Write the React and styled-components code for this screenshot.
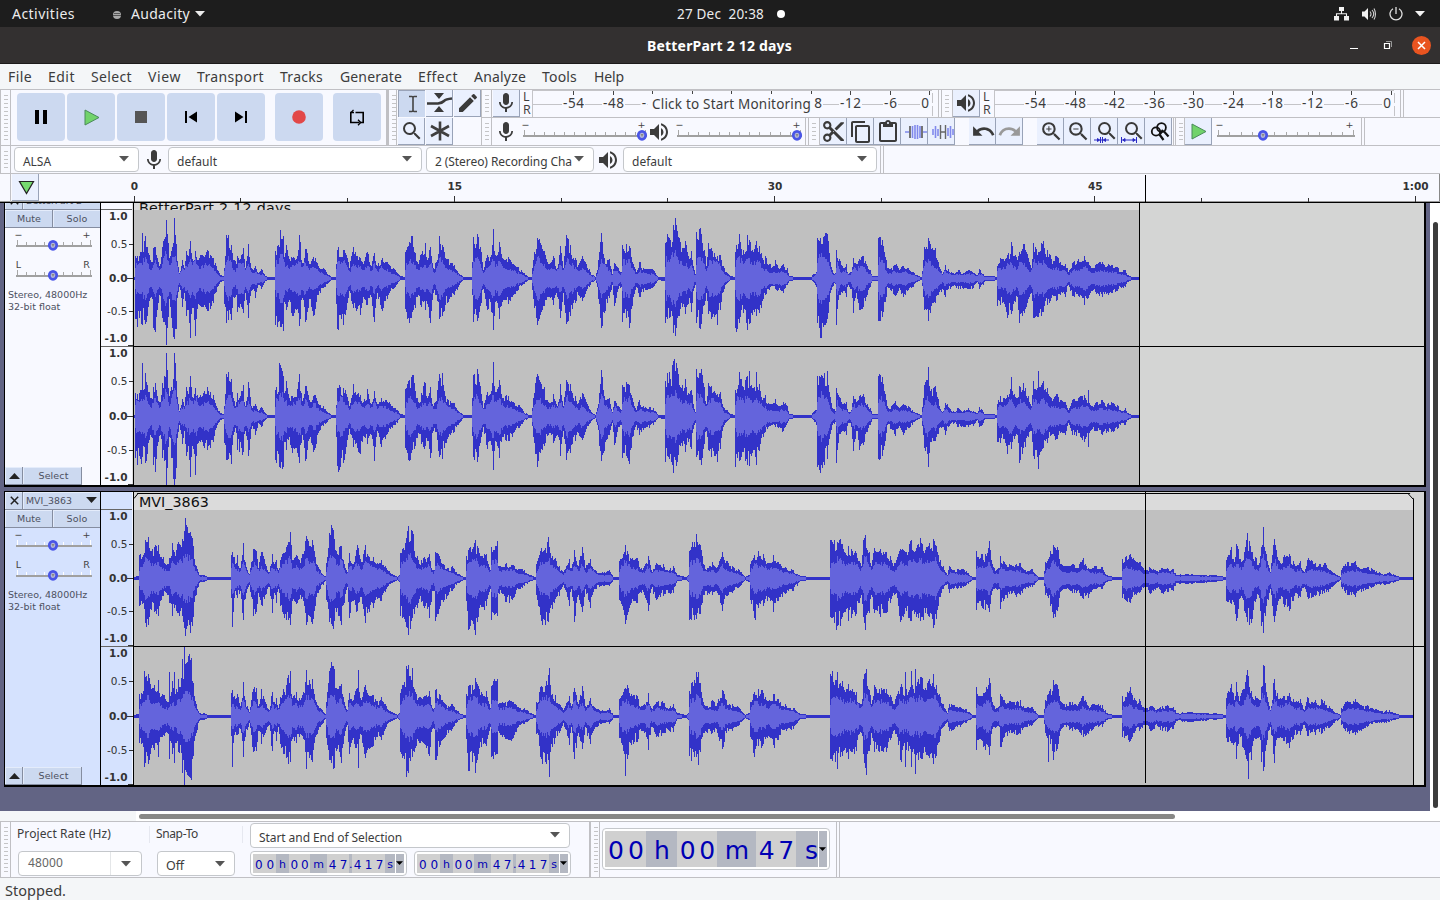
import React, { useLayoutEffect, useRef, useState } from 'react'
import styled, { createGlobalStyle, css } from 'styled-components'
import {
  MdMic,
  MdVolumeUp,
  MdEdit,
  MdSearch,
  MdZoomIn,
  MdZoomOut,
  MdContentCut,
  MdContentCopy,
  MdContentPaste,
  MdUndo,
  MdRedo
} from 'react-icons/md'

const color = {
  bar: '#f8f9ff',
  chrome: '#f4f6f8',
  line: '#c0c0c4',
  button: '#ccd9f0',
  tool: '#eaf0fe',
  edge: '#99a3b8',
  text: '#3c3c3c',
  track: '#626484',
  selected: '#d5e2fe',
  wave: '#3232c8',
  rms: '#6464dc',
  knob: '#4a55e6'
}

const ui = `'Noto Sans', 'Open Sans', sans-serif`
const mono = `'DejaVu Sans', sans-serif`

const GlobalStyle = createGlobalStyle`
  * { box-sizing: border-box; }
  body {
    margin: 0;
    overflow: hidden;
    font-family: ${ui};
    color: ${color.text};
  }
  svg { display: block; flex: none; }
`

const Window = styled.div`
  width: 1440px;
  height: 900px;
  display: flex;
  flex-direction: column;
  background: ${color.chrome};
`

/* ---------- text ---------- */

const Text = styled.span`
  flex: none;
  display: block;
  white-space: pre;
  font-family: ${props => props.$font || ui};
  font-size: ${props => props.$size || 14}px;
  font-weight: ${props => props.$bold ? 700 : 400};
  color: ${props => props.$color || 'inherit'};
  line-height: 18px;
  margin-left: ${props => props.$ml || 0}px;
  width: ${props => props.$w}px;
`

/**
 * One-line label which spreads its letters over a fixed width
 */
function Label ({ w, children, ...rest }) {
  const ref = useRef(null)
  const [spacing, setSpacing] = useState(0)
  useLayoutEffect(() => {
    const range = document.createRange()
    range.selectNodeContents(ref.current)
    setSpacing((w - range.getBoundingClientRect().width) / String(children).length)
  }, [w, children])
  return <Text ref={ref} $w={w} style={{ letterSpacing: spacing }} {...rest}>{children}</Text>
}

/* ---------- desktop bar and title bar ---------- */

const DesktopBar = styled.div`
  flex: none;
  height: 27px;
  background: #1d1d1d;
  color: #ececec;
  display: flex;
  align-items: center;
`
const AppIcon = styled.div`
  margin: 2px 9px 0 37px;
  width: 10px;
  height: 10px;
`
const Tray = styled.div`
  margin-left: auto;
  padding-right: 15px;
  display: flex;
  align-items: center;
  gap: 12px;
`
const Dot = styled.div`
  width: 8px;
  height: 8px;
  border-radius: 50%;
  background: #fff;
  margin-left: 13px;
`
const TitleBar = styled.div`
  flex: none;
  height: 37px;
  background: #333030;
  border-bottom: 1px solid #1c1b1b;
  color: #fff;
  display: flex;
  align-items: center;
  padding: 1px 9px 0 0;
`
const WindowButtons = styled.div`
  margin-left: auto;
  display: flex;
  align-items: center;
  gap: 20px;
`
const Close = styled.div`
  width: 19px;
  height: 19px;
  border-radius: 50%;
  background: #e95420;
  display: flex;
  align-items: center;
  justify-content: center;
`
const MenuBar = styled.div`
  flex: none;
  height: 26px;
  display: flex;
  align-items: center;
  background: ${color.chrome};
  border-bottom: 1px solid ${color.line};
  padding-left: 8px;
`

const Caret = ({ w = 10, fill = '#555' }) => (
  <svg width={w} height={w / 2 + 1} viewBox='0 0 10 6'><path d='M0 0H10L5 5.5Z' fill={fill} /></svg>
)

/* ---------- toolbars ---------- */

const Dock = styled.div`
  flex: none;
  display: flex;
  height: ${props => props.$h}px;
  background: ${color.bar};
  border-bottom: 1px solid ${color.line};
`
const Stack = styled.div`
  flex: 1;
  display: flex;
  flex-direction: column;
`
const Row = styled.div`
  display: flex;
  height: ${props => props.$h}px;
  ${props => props.$line && css`border-bottom: 1px solid ${color.line};`}
`
const Bar = styled.div`
  flex: none;
  display: flex;
  align-items: ${props => props.$align || 'flex-start'};
  width: ${props => props.$w}px;
  border-right: ${props => props.$end ?? 1}px solid ${color.line};
  margin-right: ${props => props.$mr || 0}px;
`
const Grabber = styled.div`
  flex: none;
  align-self: stretch;
  width: ${props => props.$w || 11}px;
  border-left: 1px solid ${color.line};
  border-right: 1px solid ${color.line};
  padding: 5px 2px 4px 3px;
  &::before {
    content: '';
    display: block;
    width: 4px;
    height: 100%;
    background: repeating-linear-gradient(#c4c4c6 0 1px, transparent 1px 4px);
  }
`
const TransportButtons = styled.div`
  display: flex;
  padding: 3px 0 0 6px;
  gap: 2px;
`
const BigButton = styled.div`
  width: 48px;
  height: 48px;
  border-radius: 4px;
  background: ${color.button};
  display: flex;
  align-items: center;
  justify-content: center;
  margin-left: ${props => props.$gap || 0}px;
`
const ToolGrid = styled.div`
  display: grid;
  grid-template-columns: repeat(3, 27px);
  grid-template-rows: 27px 27px;
  gap: 1px;
  padding-left: 1px;
`
const ToolButton = styled.div`
  flex: none;
  width: 27px;
  height: 27px;
  margin-left: ${props => props.$ml || 0}px;
  padding: ${props => props.$pad || '0 0 0 1px'};
  display: flex;
  align-items: center;
  justify-content: center;
  color: ${props => props.$color || '#3a3a3a'};
  background: ${props => props.$on ? color.button : color.tool};
  border: 0 solid ${color.edge};
  border-width: ${props => props.$on ? '1px 0 0 1px' : '0 1px 1px 0'};
`
const Plain = styled.div`
  flex: none;
  width: ${props => props.$w || 24}px;
  height: 27px;
  margin-left: ${props => props.$ml || 0}px;
  display: flex;
  align-items: center;
  justify-content: center;
`
const Channels = styled.div`
  width: 11px;
  margin-left: 3px;
  display: flex;
  flex-direction: column;
  font-family: 'Open Sans', sans-serif;
  font-size: 12.5px;
  line-height: 13px;
`
const MeterArea = styled.div`
  position: relative;
`
const MeterHint = styled.div`
  position: absolute;
  left: 116px;
  top: 4px;
  height: 19px;
  width: 166px;
  padding: 1px 0 0 4px;
  background: ${color.bar};
`
const Combo = styled.div`
  flex: none;
  width: ${props => props.$w}px;
  height: 25px;
  margin-left: ${props => props.$ml || 0}px;
  border: 1px solid #c4c7cb;
  border-radius: 4px;
  background: #fff;
  display: flex;
  align-items: center;
  justify-content: space-between;
  padding: 4px 9px 0 8px;
  overflow: hidden;
  & > svg { margin-top: -6px; }
`

function Slider ({ length, knob, steps, left = '−', right = '+', light, labelAt = 4 }) {
  const ticks = Array.from({ length: steps + 1 }, (_, i) => 1.5 + Math.round(i * (length - 3) / steps))
  return (
    <svg width={length} height='27' style={{ overflow: 'visible' }}>
      <g fontFamily={mono} fontSize='9.5' fill='#444' textAnchor='middle'>
        <text x='2.5' y={labelAt + 6}>{left}</text>
        <text x={length - 5.5} y={labelAt + 6}>{right}</text>
      </g>
      <path
        d={ticks.map((x, i) => `M${x} ${i % steps === 0 ? 12 : 14}V17`).join('')}
        stroke={light ? '#fff' : '#a8a8a8'} shapeRendering='crispEdges'
      />
      <rect x='0' y='17' width={length} height='2' fill='#a0a0a0' />
      <ellipse cx={knob} cy='17.3' rx='3.7' ry='4' fill='#b4b8d8' stroke={color.knob} strokeWidth='2.8' />
      <path d={`M${knob - 1.5} 16h3l-1.5 3z`} fill='#888' />
    </svg>
  )
}

const SCALE = ['-54', '-48', '-42', '-36', '-30', '-24', '-18', '-12', '-6', '0']
// while the hint is shown only the ends of the covered labels stick out
const COVERED = ['-54', '-48', '-', '', '', '', '8', '-12', '-6', '0']
const MARK_WIDTH = { 1: 8, 2: 13, 3: 21 }

function Meter ({ width, first, step, labels = SCALE }) {
  return (
    <svg width={width} height='27'>
      <path d={`M.5 0V27M${width - 5.5} 3V13M${width - 5.5} 16V26M0 14.5H${width - 8}M0 .5H${width - 6}`} stroke='#c4c4c8' shapeRendering='crispEdges' />
      {labels.map((mark, i) => {
        const tick = Math.round(first + i * step)
        const w = mark === '-' ? 5 : MARK_WIDTH[mark.length]
        const x = mark === '-' ? tick - 8 : mark === '8' ? tick + 7 : mark === '0' ? tick - 4 : tick + 0.5
        return (
          <g key={i}>
            <path d={`M${tick + 0.5} 1v4`} stroke='#444' />
            {mark && <rect x={x - w / 2 - 1} y='6' width={w + 2} height='14' fill={color.bar} />}
            {mark && (
              <text x={x} y='18' textAnchor='middle' fontFamily={ui} fontSize='13.5' fill='#3c3c3c' textLength={w}>
                {mark}
              </text>
            )}
          </g>
        )
      })}
    </svg>
  )
}

/* ---------- icons which no package has ---------- */

const PlayIcon = () => (
  <svg width='17' height='17' viewBox='-1 0 17 17'>
    <path d='M1 1L15 8.5L1 16Z' fill='#71d36a' stroke='#4a8a5a' strokeWidth='1' />
  </svg>
)
const SkipIcon = ({ flip }) => (
  <svg width='14' height='14' viewBox='0 0 14 14' transform={flip ? 'scale(-1 1)' : undefined}>
    <path d='M1 1h2v12H1zM13 1.5v11L4.5 7z' fill='#000' />
  </svg>
)
const LoopIcon = () => (
  <svg width='16' height='17' viewBox='0 0 16 17' fill='none' stroke='#000' strokeWidth='1.6'>
    <path d='M5 3.500H1.800V13.500H10.500M11.500 13.500H14.200V3.500H6.500' />
    <path d='M4.500 .8L2.200 3.500M9 10.800L11.700 13.500L9 16.200' strokeWidth='1.3' />
  </svg>
)
const IBeamIcon = () => (
  <svg width='10' height='18' viewBox='0 0 10 18' fill='none' stroke='#444' strokeWidth='1.6'>
    <path d='M1 1.5H4Q5 1.5 5 3V15Q5 16.5 4 16.5H1M9 1.5H6Q5 1.5 5 3M9 16.5H6Q5 16.5 5 15' />
  </svg>
)
const EnvelopeIcon = () => (
  <svg width='26' height='22' viewBox='0 0 26 22' fill='#3a3a3a'>
    <path d='M7 1H17L12 7ZM12 14L17 20H7Z' />
    <path d='M0 11.5H11Q15 11 17 9T25 6.5' fill='none' stroke='#3a3a3a' strokeWidth='2.6' />
  </svg>
)
const StarIcon = () => (
  <svg width='20' height='20' viewBox='0 0 20 20' stroke='#3f3f3f' strokeWidth='2.6'>
    <path d='M10 .5V19.5M1 5L19 15M19 5L1 15' />
  </svg>
)
const WaveMark = ({ silence }) => (
  <svg width='22' height='16' viewBox='0 0 22 16' fill='none'>
    {silence
      ? <path d='M1 5v6M3.5 2v12M6 5v7M16 4v8M18.5 2v12M21 5v6' stroke='#8089ec' strokeWidth='1.6' />
      : <path d='M0 8H4M18 8H22M7.5 2v12M10 1v14M12.5 1v14M15 2v12' stroke='#8089ec' strokeWidth='1.6' />}
    {silence
      ? <path d='M8.5 1v14M13.5 1v14M8.5 8h5' stroke='#666' strokeWidth='1.4' />
      : <path d='M5 2v12M17 2v12' stroke='#555' strokeWidth='1.6' />}
  </svg>
)
const FitIcon = ({ whole }) => (
  <svg width='26' height='27' viewBox='0 0 26 27'>
    <g transform='translate(2 1)'>
      <path fill='#3a3a3a' d='M15.500 14h-.79l-.28-.27A6.471 6.471 0 0 0 16 9.500 6.500 6.500 0 1 0 9.500 16c1.610 0 3.090-.59 4.230-1.570l.27.28v.79l5 4.990L20.490 19l-4.990-5zm-6 0C7.010 14 5 11.990 5 9.500S7.010 5 9.500 5 14 7.010 14 9.500 11.990 14 9.500 14z' />
    </g>
    {whole
      ? <path d='M1.500 19v6M16.500 19v6M2 22h14M5 20.500l-2 1.500l2 1.500zM13 20.500l2 1.500l-2 1.500z' stroke='#2a2ac4' fill='#2a2ac4' />
      : <path d='M1 22h15M7.500 19v6M9.500 19v6M4.500 20.500l2 1.500l-2 1.500zM12.500 20.500l-2 1.500l2 1.500z' stroke='#2a2ac4' fill='#2a2ac4' />}
  </svg>
)
const ToggleZoomIcon = () => (
  <svg width='20' height='20' viewBox='0 0 20 20' fill='none' stroke='#111' strokeWidth='1.8'>
    <circle cx='11.500' cy='5.500' r='4.400' />
    <circle cx='6' cy='9.500' r='4.200' />
    <path d='M14 9.500L18.500 14.500M9.500 12.500L13.500 18M13 8L10 12' strokeWidth='2.200' />
  </svg>
)
const NetworkIcon = () => (
  <svg width='15' height='14' viewBox='0 0 15 14' fill='#f2f2f2'>
    <path d='M5 0h5v4H5zM0 9h5v4.5H0zM10 9h5v4.5h-5z' />
    <path d='M7.5 4v3M2.5 9V6.7h10V9' fill='none' stroke='#f2f2f2' strokeWidth='1.1' />
  </svg>
)
const TrayVolumeIcon = () => (
  <svg width='16' height='14' viewBox='0 0 16 14' fill='#f2f2f2'>
    <path d='M1 4.5h2.5L7 1v12L3.500 9.500H1z' />
    <path d='M9 4.500q2 2.500 0 5M11 3q3.500 4 0 8M13 1.500q3 5.500 0 11' fill='none' stroke='#d0d0d0' strokeWidth='1.1' />
  </svg>
)
const PowerIcon = () => (
  <svg width='14' height='14' viewBox='0 0 14 14' fill='none' stroke='#e0e0e0' strokeWidth='1.300'>
    <path d='M4 1.700A6 6 0 1 0 10 1.700M7 0V7' />
  </svg>
)

/* ---------- timeline ---------- */

const Timeline = styled.div`
  flex: none;
  height: 29px;
  display: flex;
  background: ${color.bar};
  border-bottom: 1px solid #000;
  box-shadow: inset 0 -1px #999, inset -1px 0 #888;
`
const PinCell = styled.div`
  width: 11px;
  border-right: 1px solid ${color.line};
`

function Ruler () {
  // the origin sits at x = 134 of the window, 5 seconds are 106.75px
  const marks = Array.from({ length: 13 }, (_, i) => i)
  const names = { 0: '0', 3: '15', 6: '30', 9: '45', 12: '1:00' }
  return (
    <svg width='1400' height='28'>
      {marks.map(i => {
        const x = Math.floor(95 + i * 106.75)
        return <path key={i} d={`M${x + 0.5} ${names[i] ? 22 : 24}V28`} stroke='#333' />
      })}
      {Object.keys(names).map(i => (
        <text key={i} x={95.5 + i * 106.75} y='16' textAnchor='middle' fontFamily={mono} fontWeight='700' fontSize='10.5' fill='#333'>
          {names[i]}
        </text>
      ))}
      <path d='M1106.5 1V28' stroke='#000' />
    </svg>
  )
}

/* ---------- tracks ---------- */

const TrackArea = styled.div`
  flex: none;
  display: flex;
  height: 608px;
`
const TrackCanvas = styled.div`
  width: 1430px;
  background: ${color.track};
  overflow: hidden;
`
const VScroll = styled.div`
  width: 10px;
  background: #fff;
  padding: 19px 2px 0 3px;
  &::before {
    content: '';
    display: block;
    width: 5px;
    height: 586px;
    border-radius: 3px;
    background: #3c3c3c;
  }
`
const Track = styled.div`
  display: flex;
  width: 1421px;
  height: 296px;
  margin: ${props => props.$mt}px 0 0 4px;
  border: 1px solid #000;
  border-width: 1px 1px 2px 1px;
  box-shadow: 1px 0 #000;
  background: #d4d5d4;
  overflow: hidden;
`
const Panel = styled.div`
  flex: none;
  width: 96px;
  display: flex;
  flex-direction: column;
  border-right: 1px solid #000;
  background: ${props => props.$selected ? color.selected : color.bar};
  color: #4c5060;
`
const PanelRow = styled.div`
  display: flex;
  height: 18px;
  flex: none;
`
const PanelButton = styled.div`
  width: ${props => props.$w}px;
  display: flex;
  align-items: center;
  justify-content: ${props => props.$split ? 'space-between' : 'center'};
  padding: ${props => props.$split ? '0 3px 0 3px' : '0 0 0 1px'};
  background: ${color.button};
  border-right: 1px solid #858da0;
  border-bottom: 1px solid #858da0;
  box-shadow: inset 1px 1px #e4ecfb;
  &:last-child { border-right-width: ${props => props.$keep ? 1 : 0}px; }
`
const PanelSlider = styled.div`
  height: 30px;
  padding-left: 11px;
`
const PanelInfo = styled.div`
  padding: 1px 0 0 3px;
  font-family: ${mono};
  font-size: 9.5px;
  line-height: 12px;
  white-space: nowrap;
`
const PanelFoot = styled(PanelRow)`
  margin-top: auto;
`
const Lane = styled.div`
  position: relative;
  width: ${props => props.$w}px;
  height: 293px;
  border-right: 1px solid #000;
  background: #c0c0c0;
`
const ClipTitle = styled.div`
  height: 18px;
  padding: ${props => props.$drop}px 0 0 5px;
  background: #dbdbdb;
  overflow: hidden;
  white-space: nowrap;
  font-family: ${mono};
  font-size: 14.3px;
  letter-spacing: ${props => props.$drop ? 0.25 : 0}px;
  line-height: 20px;
  color: #111;
  box-shadow: inset 0 1px #d4d5d4, inset 0 2px #000;
`
const ClipCorners = styled.svg`
  position: absolute;
  left: 0;
  top: 0;
`
const PlayCursor = styled.div`
  position: absolute;
  left: 1011px;
  top: 0;
  width: 1px;
  height: 291px;
  background: #000;
`

// [x, above, below] of the loudest samples, in pixels
const BETTER_PART = [
  0, 1, 1, 1, 22, 40, 3, 22, 48, 5, 22, 38, 7, 26, 46, 8, 45, 46, 9, 27, 30, 11, 43, 46, 13, 30, 36, 15, 23, 22,
  18, 16, 20, 19, 30, 50, 21, 32, 54, 23, 20, 30, 26, 14, 18, 28, 32, 40, 30, 40, 44, 32, 58, 66, 33, 45, 50,
  35, 20, 20, 37, 28, 40, 39, 36, 60, 40, 62, 62, 42, 34, 50, 43, 18, 20, 45, 5, 8, 48, 18, 28, 50, 10, 14,
  52, 28, 38, 54, 22, 30, 56, 36, 58, 58, 20, 30, 61, 28, 58, 64, 18, 26, 66, 22, 26, 69, 22, 28, 73, 29, 33,
  76, 23, 30, 79, 20, 24, 83, 8, 8, 86, 3, 3, 89, 2, 2, 90, 10, 25, 92, 42, 43, 94, 45, 43, 97, 34, 42,
  99, 18, 18, 102, 14, 16, 103, 22, 32, 109, 30, 34, 111, 10, 14, 114, 33, 38, 117, 10, 12, 120, 10, 12,
  121, 12, 18, 124, 5, 6, 127, 9, 10, 130, 4, 4, 133, 1, 1, 140, 1, 1, 141, 26, 44, 145, 32, 44, 146, 50, 50,
  149, 42, 52, 150, 22, 24, 152, 34, 32, 155, 18, 20, 158, 20, 36, 162, 20, 32, 165, 42, 46, 168, 15, 18,
  171, 30, 44, 173, 24, 32, 176, 14, 20, 179, 20, 36, 181, 20, 30, 184, 12, 16, 189, 10, 9, 193, 4, 5,
  197, 1, 1, 201, 1, 1, 203, 28, 50, 209, 28, 46, 213, 20, 24, 215, 10, 12, 219, 32, 30, 223, 22, 30,
  226, 20, 36, 229, 14, 18, 233, 26, 26, 237, 12, 18, 240, 25, 44, 243, 12, 14, 247, 18, 30, 251, 16, 22,
  256, 12, 12, 261, 8, 8, 266, 2, 1, 270, 1, 1, 271, 26, 30, 275, 36, 44, 278, 43, 34, 281, 24, 28,
  284, 14, 16, 287, 24, 28, 291, 34, 30, 293, 18, 24, 296, 30, 42, 299, 10, 14, 302, 16, 16, 305, 42, 40,
  308, 34, 38, 311, 20, 26, 316, 15, 18, 320, 13, 16, 324, 5, 8, 329, 1, 1, 337, 1, 1, 339, 40, 42,
  343, 46, 44, 346, 30, 26, 349, 8, 10, 353, 24, 32, 356, 22, 24, 359, 48, 50, 361, 24, 24, 365, 36, 40,
  369, 18, 20, 374, 20, 24, 379, 14, 16, 384, 11, 11, 389, 5, 5, 394, 1, 1, 397, 1, 1, 399, 18, 20,
  403, 42, 48, 407, 32, 32, 410, 28, 28, 414, 14, 18, 419, 22, 26, 423, 10, 18, 426, 32, 40, 429, 10, 14,
  432, 42, 44, 436, 32, 36, 441, 20, 24, 444, 13, 16, 448, 22, 22, 452, 14, 12, 456, 6, 6, 461, 1, 1,
  463, 8, 8, 467, 44, 48, 470, 20, 34, 475, 18, 18, 478, 4, 6, 480, 15, 28, 484, 10, 10, 487, 6, 8,
  488, 32, 42, 492, 33, 38, 495, 32, 48, 499, 14, 18, 502, 6, 8, 505, 16, 18, 509, 10, 13, 519, 8, 8,
  524, 1, 1, 530, 1, 2, 531, 36, 46, 533, 45, 40, 536, 38, 38, 539, 55, 56, 542, 54, 50, 544, 42, 38,
  548, 30, 28, 551, 36, 34, 554, 22, 24, 557, 26, 32, 559, 12, 12, 561, 4, 6, 562, 46, 44, 567, 45, 46,
  570, 28, 26, 572, 12, 14, 574, 34, 34, 577, 30, 40, 580, 26, 40, 583, 22, 46, 586, 24, 32, 588, 12, 14,
  592, 6, 5, 596, 2, 1, 600, 1, 1, 601, 26, 50, 605, 44, 44, 609, 28, 34, 613, 42, 50, 618, 28, 36,
  622, 36, 36, 625, 32, 34, 629, 18, 20, 631, 22, 16, 634, 13, 10, 641, 17, 10, 644, 10, 11, 649, 14, 14,
  653, 10, 6, 655, 2, 2, 661, 1, 1, 677, 1, 1, 679, 4, 3, 682, 6, 8, 683, 40, 44, 686, 40, 58, 690, 42, 46,
  693, 44, 40, 695, 24, 22, 698, 8, 8, 701, 5, 5, 702, 28, 46, 705, 18, 16, 708, 12, 14, 712, 14, 18,
  714, 4, 6, 717, 6, 10, 719, 20, 34, 722, 14, 14, 725, 20, 32, 729, 22, 28, 733, 12, 16, 736, 8, 8,
  738, 2, 2, 743, 2, 2, 744, 40, 42, 748, 38, 38, 751, 22, 24, 753, 10, 8, 757, 10, 12, 761, 14, 18,
  765, 8, 9, 769, 12, 18, 774, 10, 11, 778, 6, 8, 784, 2, 2, 787, 1, 1, 789, 18, 18, 790, 30, 30,
  794, 40, 42, 797, 28, 26, 801, 30, 24, 804, 16, 16, 808, 4, 10, 811, 13, 18, 814, 9, 10, 819, 5, 7,
  824, 8, 10, 828, 4, 9, 834, 8, 10, 839, 5, 9, 843, 3, 3, 845, 9, 10, 849, 4, 6, 851, 2, 2, 859, 2, 2,
  862, 1, 1, 863, 12, 26, 866, 20, 26, 869, 18, 22, 873, 22, 38, 877, 35, 34, 880, 22, 22, 883, 18, 18,
  885, 26, 44, 889, 34, 32, 891, 28, 30, 894, 20, 20, 897, 10, 14, 899, 34, 38, 904, 26, 38, 909, 36, 32,
  913, 28, 26, 917, 18, 18, 922, 22, 22, 926, 16, 16, 931, 14, 18, 934, 6, 6, 938, 16, 18, 944, 18, 16,
  950, 22, 26, 954, 16, 20, 958, 10, 12, 963, 14, 14, 968, 16, 18, 973, 12, 14, 978, 13, 14, 983, 11, 12,
  986, 6, 8, 991, 8, 8, 993, 3, 3, 998, 1, 1, 1005, 1, 1
]

const MVI = [
  0, 1, 1, 4, 2, 1, 5, 22, 26, 8, 22, 26, 11, 38, 44, 14, 41, 46, 17, 26, 30, 20, 32, 34, 24, 32, 36, 27, 20, 20,
  29, 22, 18, 33, 14, 16, 36, 20, 24, 38, 34, 36, 41, 22, 26, 44, 36, 34, 48, 40, 38, 49, 36, 42, 51, 58, 55,
  54, 46, 42, 56, 45, 52, 59, 32, 38, 60, 20, 24, 62, 12, 16, 65, 3, 4, 69, 3, 3, 73, 1, 1, 96, 1, 1,
  97, 24, 20, 98, 26, 48, 100, 20, 18, 103, 22, 18, 106, 10, 12, 109, 34, 40, 111, 16, 20, 115, 4, 6,
  117, 16, 18, 119, 28, 36, 122, 28, 34, 124, 10, 14, 127, 26, 26, 131, 14, 16, 135, 6, 8, 138, 24, 34,
  140, 14, 14, 142, 18, 24, 144, 8, 10, 146, 18, 26, 149, 26, 36, 152, 30, 40, 156, 46, 46, 158, 18, 22,
  162, 24, 26, 165, 18, 20, 169, 24, 22, 172, 42, 46, 176, 32, 38, 178, 38, 46, 182, 14, 18, 186, 8, 10,
  191, 2, 2, 192, 14, 20, 195, 44, 42, 197, 54, 46, 199, 48, 50, 202, 28, 34, 205, 30, 36, 207, 32, 46,
  211, 10, 14, 213, 6, 8, 215, 24, 38, 218, 14, 22, 222, 28, 32, 224, 30, 24, 227, 16, 18, 231, 32, 42,
  235, 20, 32, 239, 20, 28, 243, 15, 20, 247, 18, 22, 252, 10, 10, 256, 5, 5, 263, 1, 1, 265, 3, 3, 266, 24, 36,
  269, 30, 38, 272, 40, 48, 274, 50, 54, 278, 49, 40, 280, 28, 36, 284, 18, 24, 287, 18, 24, 291, 20, 28,
  295, 24, 38, 298, 8, 12, 300, 8, 12, 301, 26, 42, 305, 22, 30, 309, 14, 22, 314, 10, 16, 318, 12, 12, 322, 6, 6,
  329, 1, 1, 331, 1, 1, 332, 22, 22, 334, 28, 50, 338, 30, 44, 341, 37, 54, 345, 26, 30, 349, 20, 28, 352, 24, 28,
  356, 8, 10, 357, 30, 40, 363, 38, 38, 364, 12, 14, 371, 14, 22, 378, 14, 22, 384, 9, 10, 390, 8, 7,
  396, 3, 2, 401, 1, 1, 402, 14, 16, 407, 30, 42, 411, 30, 46, 414, 42, 44, 418, 22, 30, 421, 20, 20,
  425, 12, 16, 429, 6, 6, 435, 20, 28, 437, 10, 10, 440, 28, 42, 444, 12, 16, 448, 30, 32, 451, 10, 10,
  456, 18, 28, 461, 8, 10, 467, 5, 7, 475, 8, 7, 479, 1, 1, 484, 1, 1, 485, 16, 20, 491, 32, 44, 496, 20, 26,
  502, 20, 24, 507, 10, 14, 510, 12, 16, 514, 22, 32, 517, 8, 10, 522, 14, 20, 529, 13, 16, 535, 8, 14,
  539, 12, 14, 543, 3, 2, 552, 1, 1, 554, 3, 3, 555, 26, 40, 560, 36, 40, 562, 44, 40, 566, 34, 36,
  569, 14, 16, 573, 10, 16, 578, 16, 16, 582, 10, 12, 588, 26, 32, 592, 16, 16, 598, 12, 14, 604, 9, 9,
  611, 1, 1, 615, 3, 3, 616, 14, 20, 620, 24, 40, 624, 26, 28, 629, 24, 28, 635, 16, 20, 639, 22, 32, 646, 14, 18,
  652, 10, 14, 659, 8, 12, 666, 2, 2, 676, 1, 1, 695, 1, 1, 696, 40, 40, 699, 34, 38, 703, 36, 48, 708, 34, 38,
  711, 24, 32, 714, 32, 42, 718, 28, 36, 722, 24, 34, 727, 12, 16, 729, 38, 38, 731, 44, 52, 735, 26, 34,
  737, 12, 16, 740, 30, 34, 745, 28, 36, 752, 26, 34, 756, 22, 24, 759, 12, 14, 763, 22, 20, 766, 30, 44,
  772, 26, 32, 777, 38, 42, 782, 30, 38, 786, 40, 42, 791, 28, 34, 795, 36, 40, 799, 40, 50, 802, 32, 40,
  806, 18, 18, 809, 12, 10, 813, 3, 5, 815, 12, 14, 823, 9, 10, 832, 7, 6, 838, 1, 1, 841, 1, 1, 842, 28, 32,
  846, 20, 22, 851, 24, 32, 855, 38, 34, 858, 14, 12, 862, 8, 10, 865, 10, 10, 866, 22, 30, 870, 16, 20, 875, 15, 16,
  882, 14, 18, 886, 15, 16, 891, 8, 10, 898, 9, 8, 904, 1, 1, 909, 1, 1, 911, 16, 16, 916, 26, 26,
  919, 34, 40, 924, 28, 28, 927, 14, 12, 932, 12, 10, 938, 14, 14, 943, 10, 12, 949, 20, 20, 954, 10, 18,
  960, 12, 10, 968, 11, 10, 972, 3, 3, 979, 1, 1, 987, 1, 1, 988, 20, 20, 995, 24, 24, 1000, 18, 16,
  1005, 17, 14, 1010, 8, 8, 1013, 8, 8, 1016, 10, 14, 1023, 7, 9, 1028, 10, 14, 1039, 9, 12, 1042, 3, 4,
  1053, 4, 5, 1068, 3, 4, 1079, 3, 3, 1091, 1, 1, 1092, 18, 22, 1097, 32, 26, 1100, 16, 26, 1102, 34, 42,
  1106, 20, 20, 1110, 26, 32, 1113, 46, 44, 1117, 26, 44, 1121, 20, 22, 1125, 16, 20, 1127, 30, 46,
  1129, 50, 53, 1132, 24, 28, 1136, 6, 10, 1140, 40, 44, 1144, 18, 22, 1149, 20, 24, 1155, 24, 32,
  1160, 14, 18, 1166, 17, 18, 1170, 6, 8, 1173, 18, 18, 1181, 16, 18, 1190, 15, 14, 1196, 8, 10, 1206, 1, 1,
  1207, 8, 8, 1211, 14, 14, 1221, 17, 18, 1229, 10, 12, 1233, 11, 10, 1242, 7, 6, 1250, 4, 6, 1255, 6, 5,
  1260, 3, 3, 1266, 1, 1, 1279, 1, 1
]

// single loud samples of the right channels
const BETTER_PART_RIGHT = {
  8: [53, 40], 32: [63, 69], 40: [63, 69], 56: [40, 60], 61: [28, 58], 92: [42, 43], 97: [37, 47], 145: [53, 50],
  204: [28, 55], 308: [43, 42], 339: [41, 40], 359: [54, 53], 403: [42, 50], 432: [36, 43], 467: [46, 44],
  538: [51, 48], 562: [47, 40], 601: [26, 50], 615: [45, 49], 622: [44, 48], 683: [40, 50], 693: [45, 42],
  794: [49, 50], 877: [39, 32], 904: [45, 52], 885: [30, 46], 954: [26, 30]
}
const MVI_RIGHT = {
  10: [45, 50], 24: [36, 40], 35: [44, 42], 40: [44, 46], 48: [57, 56], 50: [69, 68], 51: [52, 53], 52: [53, 55],
  53: [54, 58], 54: [60, 59], 55: [62, 60], 56: [56, 61], 57: [58, 63], 98: [26, 50], 172: [46, 52], 200: [47, 51],
  224: [46, 51], 272: [50, 60], 278: [48, 40], 334: [30, 54], 415: [48, 60], 491: [28, 59], 564: [44, 48],
  639: [22, 28], 698: [45, 44], 703: [44, 52], 732: [47, 58], 771: [44, 50], 777: [45, 50], 781: [47, 57],
  799: [42, 47], 855: [38, 38], 914: [22, 45], 919: [36, 43], 996: [29, 24], 1114: [40, 62], 1130: [50, 50],
  1140: [37, 46]
}

const noise = n => {
  const s = Math.sin(n * 12.9898) * 43758.5453
  return s - Math.floor(s)
}

function wavePaths (points, width, center, seed, peaks = {}) {
  const up = []
  const down = []
  const exact = {}
  for (let i = 0; i + 5 < points.length; i += 3) {
    const [x0, u0, d0, x1, u1, d1] = points.slice(i, i + 6)
    exact[x0] = true
    for (let x = x0; x <= x1; x++) {
      const t = (x - x0) / (x1 - x0)
      up[x] = u0 + (u1 - u0) * t
      down[x] = d0 + (d1 - d0) * t
    }
  }
  // quiet samples keep their level, loud ones get the grain of the recording
  const shape = (value, x, salt) => {
    if (value < 3) return value
    if (exact[x]) return value * (0.96 + 0.08 * noise(x + seed * 13))
    return value * (0.7 + 0.4 * noise(Math.floor((x + 1) / 2) + salt) + 0.1 * (noise(x + salt) - 0.5))
  }
  let outer = ''
  let inner = ''
  for (let x = 0; x < width; x++) {
    const a = up[x] || 1
    const b = down[x] || 1
    const u = peaks[x] ? peaks[x][0] : shape(a, x, seed * 71)
    const d = peaks[x] ? peaks[x][1] : shape(b, x, seed * 71 + (x % 3 ? 0 : 37))
    const top = Math.min(center, Math.round(u))
    const bottom = Math.min(center, Math.round(d))
    outer += `M${x} ${center - top}h1v${top + bottom + 1}h-1z`
    const near = [x - 1, x, x + 1].map(n => (up[n] || 1) + (down[n] || 1))
    const level = near.reduce((sum, n) => sum + n, 0) / 6
    const r = Math.round(Math.min(level * 0.46 * (0.8 + 0.36 * noise(x * 3 + seed)), top - 1, bottom - 1))
    if (r > 0) inner += `M${x} ${center - r}h1v${2 * r + 1}h-1z`
  }
  return [outer, inner]
}

function Wave ({ points, width, height, seed, peaks }) {
  const center = height / 2
  const [outer, inner] = wavePaths(points, width, center, seed, peaks)
  return (
    <svg width={width} height={height} shapeRendering='crispEdges'>
      <path d={outer} fill={color.wave} />
      <path d={inner} fill={color.rms} />
    </svg>
  )
}

const Divider = styled.div`
  height: 1px;
  width: ${props => props.$w}px;
  background: #000;
`

function Axis ({ selected }) {
  const labels = [
    ['1.0', 25], ['0.5', 53], ['0.0', 87], ['-0.5', 120], ['-1.0', 147],
    ['1.0', 162], ['0.5', 190], ['0.0', 225], ['-0.5', 259], ['-1.0', 286]
  ]
  return (
    <svg width='33' height='293'>
      <rect width='32' height='293' fill={selected ? color.selected : color.bar} />
      <path d='M31.500 0V293' stroke={selected ? '#f0f4ff' : '#ddd'} />
      <path d='M32.500 0V293' stroke='#000' />
      <path d='M0 17.500H31M0 154.500H32' stroke='#666' />
      <path d='M28 52.500h4M26 86.500h6M28 119.500h4M27 153.500h5M28 189.500h4M26 224.500h6M28 258.500h4M27 292.500h5' stroke='#333' />
      {labels.map(([name, y]) => (
        <text
          key={y} x='26.5' y={y + 3} textAnchor='end' fontFamily={mono} fontSize='10.5' fill='#333'
          fontWeight={name.endsWith('.5') ? 400 : 700}
        >
          {name}
        </text>
      ))}
    </svg>
  )
}

function AudioTrack ({ name, clip, drop, corners, width, points, right, seed, selected, mt }) {
  return (
    <Track $mt={mt}>
      <Panel $selected={selected}>
        <PanelRow>
          <PanelButton $w={18}>
            <svg width='10' height='9' viewBox='-1 0 10 9'><path d='M.8 .8L8.200 8.200M8.200 .8L.8 8.200' stroke='#222' strokeWidth='1.500' /></svg>
          </PanelButton>
          <PanelButton $w={77} $split>
            <Label w={name.length > 8 ? 56 : 46} $size={9.4} $font={mono}>{name}</Label>
            <Caret w={11} fill='#222' />
          </PanelButton>
        </PanelRow>
        <PanelRow>
          <PanelButton $w={48}><Label w={24} $size={9.5} $font={mono}>Mute</Label></PanelButton>
          <PanelButton $w={47}><Label w={21} $size={9.5} $font={mono}>Solo</Label></PanelButton>
        </PanelRow>
        <PanelSlider><Slider length={76} knob={37} steps={8} light={selected} /></PanelSlider>
        <PanelSlider><Slider length={76} knob={37} steps={8} light={selected} left='L' right='R' /></PanelSlider>
        <PanelInfo>Stereo, 48000Hz<br />32-bit float</PanelInfo>
        <PanelFoot>
          <PanelButton $w={18}>
            <svg width='12' height='6' viewBox='-1 0 12 6'><path d='M0 6H11L5.500 0Z' fill='#222' /></svg>
          </PanelButton>
          <PanelButton $w={59} $keep><Label w={30} $ml={2} $size={9.5} $font={mono}>Select</Label></PanelButton>
        </PanelFoot>
      </Panel>
      <Axis selected={selected} />
      <Lane $w={width + 1}>
        <ClipTitle $drop={drop}>{clip}</ClipTitle>
        {corners && (
          <ClipCorners width={width + 1} height='8'>
            <path d={`M0 0H4L0 7ZM${width + 1} 0H${width - 4}L${width + 1} 7Z`} fill='#d4d5d4' />
            <path d={`M0 6.500L4 1.500M${width - 5} 1.500L${width} 7`} stroke='#000' fill='none' />
          </ClipCorners>
        )}
        <Wave points={points} width={width} height={136} seed={seed} />
        <Divider $w={1290} />
        <Wave points={points} width={width} height={138} seed={seed + 5} peaks={right} />
        {selected && <PlayCursor />}
      </Lane>
    </Track>
  )
}

/* ---------- bottom ---------- */

const HScroll = styled.div`
  flex: none;
  height: 11px;
  background: linear-gradient(90deg, ${color.chrome} 136px, #fff 136px);
  border-bottom: 1px solid ${color.line};
  padding: 3px 0 0 139px;
  &::before {
    content: '';
    display: block;
    width: 1036px;
    height: 5px;
    border-radius: 3px;
    background: #888886;
  }
`
const Field = styled.div`
  display: flex;
  flex-direction: column;
  width: ${props => props.$w}px;
  padding: ${props => props.$pad || '3px 0 0 6px'};
  gap: ${props => props.$gap || 8}px;
`
const FieldRow = styled.div`
  display: flex;
  gap: 7px;
`
const Rule = styled.div`
  width: 1px;
  height: 17px;
  margin-top: 4px;
  background: #e6e8f0;
`
const TimeBox = styled.div`
  display: flex;
  align-items: stretch;
  height: ${props => props.$big ? 42 : 25}px;
  margin: ${props => props.$big ? '6px 0 0 2px' : 0};
  padding: 2px;
  border: 1px solid #c4c7cb;
  border-radius: 4px;
  background: #fff;
`
const Cell = styled.div`
  width: ${props => props.$w}px;
  padding: ${props => props.$big ? '4px 0 0 1px' : '2px 0 0'};
  display: flex;
  justify-content: ${props => props.$w < 25 && props.$big ? 'flex-end' : 'space-around'};
  align-items: center;
  font-family: ${mono};
  color: #0000b4;
  background: ${props => props.$digit ? '#d0d0d0' : '#b4b8c2'};
  font-size: ${props => props.$size}px;
  line-height: 18px;
`
const TimeArrow = styled.div`
  width: 8px;
  margin-left: 1px;
  display: flex;
  align-items: center;
  background: #b4b8c2;
`

function TimeControl ({ parts, big }) {
  return (
    <TimeBox $big={big}>
      {parts.map(([text, w], i) => {
        const digit = /\d/.test(text)
        const size = big ? 25 : digit ? 12 : 11
        return (
          <Cell key={i} $w={w} $digit={digit} $size={size} $big={big}>
            {text.split('').map((char, n) => <span key={n}>{char}</span>)}
          </Cell>
        )
      })}
      <TimeArrow><Caret w={7} fill='#000' /></TimeArrow>
    </TimeBox>
  )
}

const SMALL_TIME = [['00', 23], ['h', 13], ['00', 21], ['m', 17], ['47', 22], ['.', 3], ['417', 33], ['s', 10]]
const BIG_TIME = [['00', 41], ['h', 31], ['00', 40], ['m', 39], ['47', 40], ['s', 22]]

const RateCombo = styled(Combo)`
  padding: 0 10px 1px 8px;
  background: linear-gradient(90deg, transparent 91px, #e4e6e8 91px, #e4e6e8 92px, transparent 92px), #fff;
  & > svg { margin-top: 1px; }
`
const SnapCombo = styled(Combo)`
  & > svg { margin-top: -4px; }
`
const StatusBar = styled.div`
  flex: 1;
  display: flex;
  align-items: center;
  padding: 2px 0 0 5px;
`

const MENUS = [
  ['File', 24, 0], ['Edit', 27, 16], ['Select', 41, 16], ['View', 33, 16], ['Transport', 67, 16], ['Tracks', 43, 16],
  ['Generate', 62, 17], ['Effect', 40, 16], ['Analyze', 52, 16], ['Tools', 35, 16], ['Help', 30, 17]
]

export default function App () {
  return (
    <Window>
      <GlobalStyle />
      <DesktopBar>
        <Label w={63} $ml={12} $size={14}>Activities</Label>
        <AppIcon>
          <svg width='10' height='10' viewBox='0 0 10 10'>
            <circle cx='5' cy='5' r='4' fill='#a8a8a8' />
            <path d='M1 5.500h8M2 3.500h6' stroke='#555' />
          </svg>
        </AppIcon>
        <Label w={59} $size={14}>Audacity</Label>
        <Plain $w={10} $ml={5}><Caret w={10} fill='#ececec' /></Plain>
        <Label w={87} $ml={472} $size={13.5}>27 Dec  20:38</Label>
        <Dot />
        <Tray>
          <NetworkIcon />
          <TrayVolumeIcon />
          <PowerIcon />
          <Caret w={10} fill='#f2f2f2' />
        </Tray>
      </DesktopBar>
      <TitleBar>
        <Label w={145} $ml={647} $size={14} $bold>BetterPart 2 12 days</Label>
        <WindowButtons>
          <svg width='9' height='9'><path d='M0 7.500H8' stroke='#fff' /></svg>
          <svg width='13' height='9' viewBox='-5 0 13 9'>
            <path d='M.5 2.500h5v5h-5z' fill='none' stroke='#fff' strokeWidth='1.200' />
            <path d='M2 .5H7.500V6' fill='none' stroke='#999' />
          </svg>
          <Close>
            <svg width='9' height='9'><path d='M1 1L8 8M8 1L1 8' stroke='#fff' strokeWidth='1.500' /></svg>
          </Close>
        </WindowButtons>
      </TitleBar>
      <MenuBar>
        {MENUS.map(([name, w, ml]) => <Label key={name} w={w} $ml={ml} $size={14}>{name}</Label>)}
      </MenuBar>

      <Dock $h={56}>
        <Bar $w={388} $end={2}>
          <Grabber />
          <TransportButtons>
            <BigButton><svg width='14' height='14'><path d='M1 0h4v14H1zM9 0h4v14H9z' fill='#000' /></svg></BigButton>
            <BigButton><PlayIcon /></BigButton>
            <BigButton><svg width='12' height='12'><rect width='12' height='12' fill='#555' /></svg></BigButton>
            <BigButton><SkipIcon /></BigButton>
            <BigButton><SkipIcon flip /></BigButton>
            <BigButton $gap={8}><svg width='14' height='14'><circle cx='7' cy='7' r='6.800' fill='#e24848' /></svg></BigButton>
            <BigButton $gap={8}><LoopIcon /></BigButton>
          </TransportButtons>
        </Bar>
        <Bar $w={93} $end={0}>
          <Grabber $w={9} />
          <ToolGrid>
            <ToolButton $on><IBeamIcon /></ToolButton>
            <ToolButton><EnvelopeIcon /></ToolButton>
            <ToolButton><MdEdit size={24} /></ToolButton>
            <ToolButton><MdSearch size={24} /></ToolButton>
            <ToolButton><StarIcon /></ToolButton>
          </ToolGrid>
        </Bar>
        <Stack>
          <Row $h={28} $line>
            <Bar $w={458} $mr={2}>
              <Grabber />
              <ToolButton $ml={1} $pad='0 1px 0 0'><MdMic size={24} /></ToolButton>
              <Channels><span>L</span><span>R</span></Channels>
              <MeterArea>
                <Meter width={406} first={41} step={39.6} labels={COVERED} />
                <MeterHint><Label w={159} $size={13.500}>Click to Start Monitoring</Label></MeterHint>
              </MeterArea>
            </Bar>
            <Bar $w={460} $mr={2}>
              <Grabber $w={12} />
              <ToolButton $pad='0 1px 0 0'><MdVolumeUp size={24} /></ToolButton>
              <Channels><span>L</span><span>R</span></Channels>
              <Meter width={406} first={41} step={39.5} />
            </Bar>
            <Bar $w={1} />
          </Row>
          <Row $h={27}>
            <Bar $w={325} $mr={2}>
              <Grabber />
              <Plain $ml={2}><MdMic size={24} /></Plain>
              <Plain $w={124} $ml={5}><Slider length={124} knob={119} steps={12} /></Plain>
              <Plain><MdVolumeUp size={24} /></Plain>
              <Plain $w={125} $ml={6}><Slider length={125} knob={120} steps={12} /></Plain>
            </Bar>
            <Bar $w={366} $mr={1}>
              <Grabber $w={12} />
              <ToolButton $pad='0 0 0 1px'><MdContentCut size={25} /></ToolButton>
              <ToolButton $pad='1px 0 0 1px'><MdContentCopy size={24} /></ToolButton>
              <ToolButton $pad='1px 0 0 2px'><MdContentPaste size={24} /></ToolButton>
              <ToolButton $pad='1px 0 0 3px'><WaveMark /></ToolButton>
              <ToolButton $pad='1px 0 0 3px'><WaveMark silence /></ToolButton>
              <ToolButton $ml={14} $pad='1px 0 0 3px'><MdUndo size={25} /></ToolButton>
              <ToolButton $color='#999'><MdRedo size={25} /></ToolButton>
              <ToolButton $ml={14} $pad='1px 0 0 3px'><MdZoomIn size={25} /></ToolButton>
              <ToolButton $pad='1px 0 0 3px'><MdZoomOut size={25} /></ToolButton>
              <ToolButton $pad='1px 0 0 3px'><FitIcon /></ToolButton>
              <ToolButton $pad='1px 0 0 3px'><FitIcon whole /></ToolButton>
              <ToolButton $pad='1px 0 0 3px'><ToggleZoomIcon /></ToolButton>
            </Bar>
            <Bar $w={187} $mr={2}>
              <Grabber $w={10} />
              <ToolButton><PlayIcon /></ToolButton>
              <Plain $w={138} $ml={5}><Slider length={138} knob={46} steps={12} /></Plain>
            </Bar>
            <Bar $w={1} />
          </Row>
        </Stack>
      </Dock>

      <Dock $h={28}>
        <Bar $w={881} $mr={2} $align='center'>
          <Grabber />
          <Combo $w={125} $ml={3}><Label w={28} $size={12}>ALSA</Label><Caret /></Combo>
          <Plain $ml={3}><MdMic size={24} /></Plain>
          <Combo $w={254} $ml={2}><Label w={40} $size={12}>default</Label><Caret /></Combo>
          <Combo $w={168} $ml={4}><Label w={137} $size={12}>2 (Stereo) Recording Cha</Label><Caret /></Combo>
          <Plain $ml={2}><MdVolumeUp size={24} /></Plain>
          <Combo $w={254} $ml={3}><Label w={40} $size={12}>default</Label><Caret /></Combo>
        </Bar>
        <Bar $w={1} />
      </Dock>

      <Timeline>
        <PinCell />
        <ToolButton $ml={1} $pad='0 0 0 3px'>
          <svg width='17' height='15' viewBox='0 0 17 15'><path d='M1.500 1.500H15.500L8.500 13.500Z' fill='#76d96f' stroke='#222' strokeWidth='1.200' /></svg>
        </ToolButton>
        <Ruler />
      </Timeline>

      <TrackArea>
        <TrackCanvas>
          <AudioTrack
            name='BetterPart 2' clip='BetterPart 2 12 days' drop={6} width={1005}
            points={BETTER_PART} right={BETTER_PART_RIGHT} seed={3} mt={-12}
          />
          <AudioTrack
            name='MVI_3863' clip='MVI_3863' drop={0} corners width={1279}
            points={MVI} right={MVI_RIGHT} seed={8} mt={4} selected
          />
        </TrackCanvas>
        <VScroll />
      </TrackArea>
      <HScroll />

      <Dock $h={56}>
        <Bar $w={590}>
          <Grabber />
          <Field $w={138}>
            <Label w={94} $size={12}>Project Rate (Hz)</Label>
            <RateCombo $w={124} $ml={1}><Label w={35} $ml={1} $size={12} $color='#666'>48000</Label><Caret /></RateCombo>
          </Field>
          <Rule />
          <Field $w={92}>
            <Label w={42} $size={12}>Snap-To</Label>
            <SnapCombo $w={78} $ml={1}><Label w={18} $size={12.5}>Off</Label><Caret /></SnapCombo>
          </Field>
          <Rule />
          <Field $w={330} $pad='1px 0 0 7px' $gap={3}>
            <Combo $w={320}><Label w={143} $size={12}>Start and End of Selection</Label><Caret /></Combo>
            <FieldRow>
              <TimeControl parts={SMALL_TIME} />
              <TimeControl parts={SMALL_TIME} />
            </FieldRow>
          </Field>
        </Bar>
        <Bar $w={247} $mr={2}>
          <Grabber $w={10} />
          <TimeControl parts={BIG_TIME} big />
        </Bar>
        <Bar $w={1} />
      </Dock>
      <StatusBar><Label w={61} $size={14.5}>Stopped.</Label></StatusBar>
    </Window>
  )
}
